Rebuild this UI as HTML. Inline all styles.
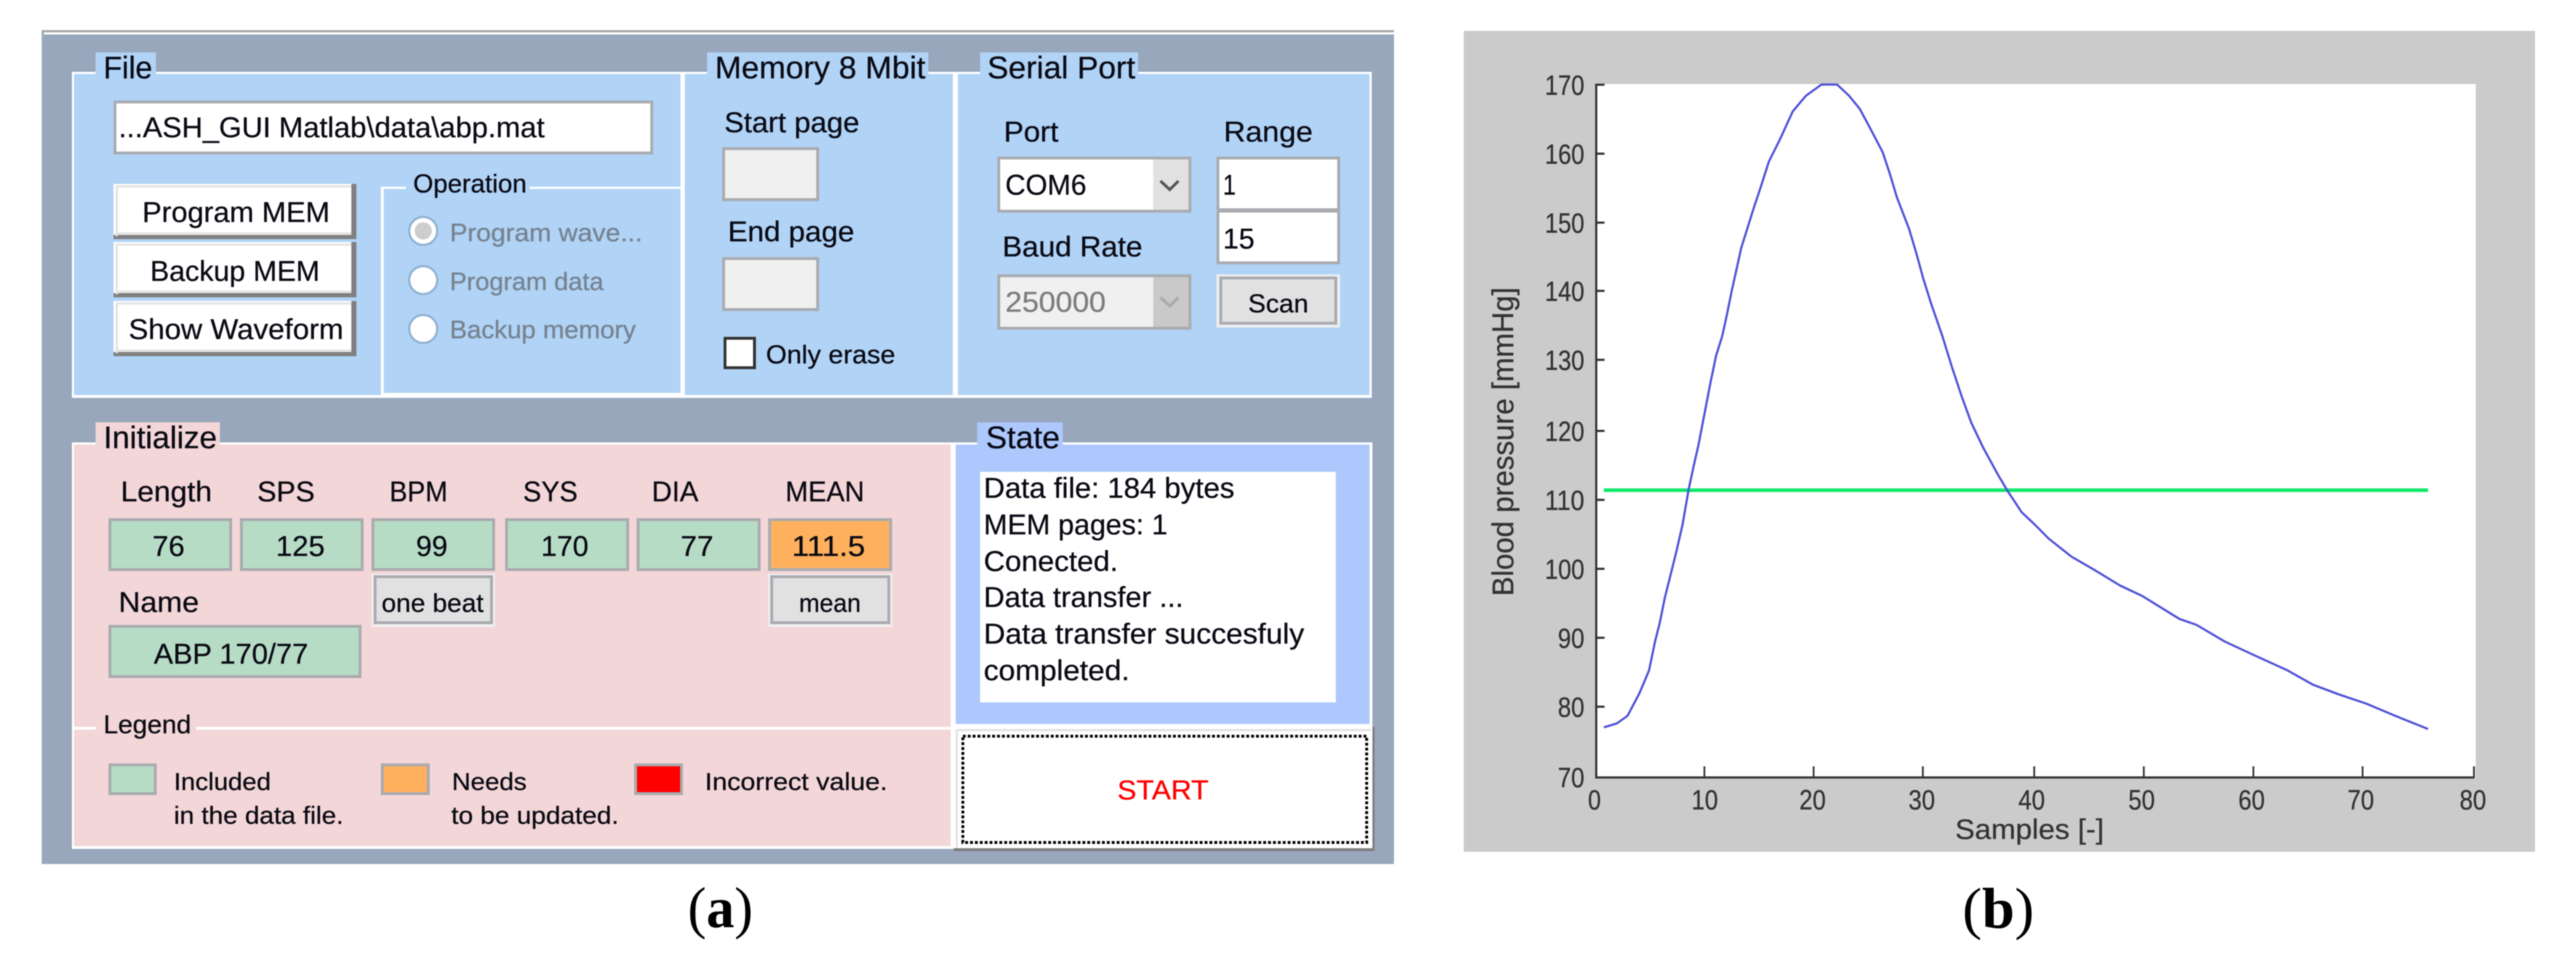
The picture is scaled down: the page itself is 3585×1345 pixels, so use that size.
<!DOCTYPE html>
<html><head><meta charset="utf-8"><title>GUI and waveform</title>
<style>
html,body{margin:0;padding:0;background:#fff}
body{width:3585px;height:1345px;overflow:hidden}
svg{display:block;filter:blur(.7px)}
text{font-family:"Liberation Sans",sans-serif;fill:#0a0a14;stroke:#0a0a14;stroke-width:.35px}
.g{font-size:44px}.l{font-size:40px}.s{font-size:36px}.d{fill:#76828f;stroke:#76828f;font-size:35px}
.ax{fill:#333;stroke:#333;font-size:39px}
.cap{font-family:"Liberation Serif",serif;font-size:80px;fill:#000;stroke:none}
.i{stroke:#a9abb0;stroke-width:4}
</style></head><body>
<svg xmlns="http://www.w3.org/2000/svg" width="3585" height="1345" viewBox="0 0 3585 1345">
<rect width="3585" height="1345" fill="#fff"/>
<!-- GUI panel -->
<rect x="58" y="42" width="1882" height="1161" fill="#98a7bc"/>
<rect x="58" y="42" width="1882" height="3" fill="#a5a5a5"/>
<rect x="61" y="45" width="1879" height="3" fill="#fff"/>
<!-- top boxes -->
<rect x="100" y="100" width="1809" height="454" fill="#fff"/>
<rect x="103" y="103" width="844" height="447" fill="#b0d3f6"/>
<rect x="953" y="103" width="373" height="447" fill="#b0d3f6"/>
<rect x="1333" y="103" width="573" height="447" fill="#b0d3f6"/>
<rect x="133" y="73" width="84" height="38" fill="#b0d3f6"/>
<rect x="984" y="73" width="308" height="38" fill="#b0d3f6"/>
<rect x="1364" y="73" width="220" height="38" fill="#b0d3f6"/>
<text x="144" y="109" class="g" textLength="68" lengthAdjust="spacingAndGlyphs">File</text>
<text x="995" y="109" class="g" textLength="293" lengthAdjust="spacingAndGlyphs">Memory 8 Mbit</text>
<text x="1374" y="109" class="g" textLength="206" lengthAdjust="spacingAndGlyphs">Serial Port</text>
<!-- file path -->
<rect x="160" y="142" width="747" height="71" fill="#fff" class="i"/>
<text x="165" y="191" class="l" textLength="593" lengthAdjust="spacingAndGlyphs">...ASH_GUI Matlab\data\abp.mat</text>
<!-- buttons -->
<g>
<rect x="158" y="256" width="338" height="77" fill="#808080"/><rect x="158" y="256" width="331" height="71" fill="#fff"/><path d="M162.500 329V259.500H489M162 325H489" fill="none" stroke="#e3e3e3" stroke-width="3"/>
<rect x="158" y="337" width="338" height="77" fill="#808080"/><rect x="158" y="337" width="331" height="71" fill="#fff"/><path d="M162.500 410V340.500H489M162 406H489" fill="none" stroke="#e3e3e3" stroke-width="3"/>
<rect x="158" y="419" width="338" height="77" fill="#808080"/><rect x="158" y="419" width="331" height="71" fill="#fff"/><path d="M162.500 492V422.500H489M162 488H489" fill="none" stroke="#e3e3e3" stroke-width="3"/>
</g>
<text x="198" y="309" class="l" textLength="261" lengthAdjust="spacingAndGlyphs">Program MEM</text>
<text x="209" y="391" class="l" textLength="236" lengthAdjust="spacingAndGlyphs">Backup MEM</text>
<text x="179" y="472" class="l" textLength="299" lengthAdjust="spacingAndGlyphs">Show Waveform</text>
<!-- Operation -->
<rect x="530" y="260" width="417" height="3" fill="#fff"/>
<rect x="530" y="260" width="4" height="290" fill="#fff"/>
<rect x="530" y="547" width="417" height="3" fill="#fff"/>
<rect x="565" y="250" width="172" height="20" fill="#b0d3f6"/>
<text x="575" y="268" class="s" textLength="158" lengthAdjust="spacingAndGlyphs">Operation</text>
<g stroke="#8fb2d0" stroke-width="3" fill="#fff">
<circle cx="589" cy="321.500" r="19.500"/><circle cx="589" cy="390" r="19.500"/><circle cx="589" cy="458" r="19.500"/></g>
<circle cx="589" cy="321.500" r="12" fill="#cdcdcd"/>
<text x="626" y="336" class="d" textLength="268" lengthAdjust="spacingAndGlyphs">Program wave...</text>
<text x="626" y="404" class="d" textLength="214" lengthAdjust="spacingAndGlyphs">Program data</text>
<text x="626" y="471" class="d" textLength="259" lengthAdjust="spacingAndGlyphs">Backup memory</text>
<!-- Memory -->
<text x="1008" y="184" class="l" textLength="188" lengthAdjust="spacingAndGlyphs">Start page</text>
<rect x="1007" y="207" width="131" height="71" fill="#f0f0f0" class="i"/>
<text x="1013" y="336" class="l" textLength="176" lengthAdjust="spacingAndGlyphs">End page</text>
<rect x="1007" y="360" width="131" height="71" fill="#f0f0f0" class="i"/>
<rect x="1009" y="471" width="41" height="41" fill="#fff" stroke="#333" stroke-width="4"/>
<text x="1066" y="506" class="s" textLength="180" lengthAdjust="spacingAndGlyphs">Only erase</text>
<!-- Serial -->
<text x="1397" y="197" class="l" textLength="76" lengthAdjust="spacingAndGlyphs">Port</text>
<text x="1703" y="197" class="l" textLength="124" lengthAdjust="spacingAndGlyphs">Range</text>
<rect x="1390" y="220" width="266" height="74" fill="#fff" class="i"/>
<rect x="1605" y="222" width="49" height="70" fill="#e1e1e1"/>
<path d="M1615 252L1628 264L1640 252" fill="none" stroke="#555" stroke-width="4"/>
<text x="1399" y="271" class="l" textLength="113" lengthAdjust="spacingAndGlyphs">COM6</text>
<rect x="1695" y="220" width="168" height="72" fill="#fff" class="i"/>
<rect x="1695" y="294" width="168" height="72" fill="#fff" class="i"/>
<text x="1702" y="271" class="l" textLength="18" lengthAdjust="spacingAndGlyphs">1</text>
<text x="1702" y="346" class="l" textLength="44" lengthAdjust="spacingAndGlyphs">15</text>
<text x="1395" y="357" class="l" textLength="195" lengthAdjust="spacingAndGlyphs">Baud Rate</text>
<rect x="1390" y="384" width="266" height="73" fill="#f0f0f0" class="i"/>
<rect x="1605" y="386" width="49" height="69" fill="#c9c9c9"/>
<path d="M1615 414L1628 426L1640 414" fill="none" stroke="#aaa" stroke-width="4"/>
<text x="1399" y="434" class="l" textLength="140" lengthAdjust="spacingAndGlyphs" style="fill:#7d7d7d;stroke:#7d7d7d">250000</text>
<rect x="1693" y="382" width="172" height="74" fill="#eee"/>
<rect x="1699" y="387" width="160" height="63" fill="#e1e1e1" class="i"/>
<text x="1737" y="435" class="s" textLength="84" lengthAdjust="spacingAndGlyphs">Scan</text>
<!-- Initialize -->
<rect x="100" y="616" width="1230" height="566" fill="#fff"/>
<rect x="103" y="619" width="1220" height="559" fill="#f3d6d7"/>
<rect x="133" y="588" width="173" height="38" fill="#f3d6d7"/>
<text x="144" y="624" class="g" textLength="158" lengthAdjust="spacingAndGlyphs">Initialize</text>
<text x="168" y="698" class="l" textLength="127" lengthAdjust="spacingAndGlyphs">Length</text>
<text x="358" y="698" class="l" textLength="80" lengthAdjust="spacingAndGlyphs">SPS</text>
<text x="542" y="698" class="l" textLength="81" lengthAdjust="spacingAndGlyphs">BPM</text>
<text x="728" y="698" class="l" textLength="76" lengthAdjust="spacingAndGlyphs">SYS</text>
<text x="907" y="698" class="l" textLength="65" lengthAdjust="spacingAndGlyphs">DIA</text>
<text x="1093" y="698" class="l" textLength="110" lengthAdjust="spacingAndGlyphs">MEAN</text>
<g fill="#b7dcc6" class="i">
<rect x="153" y="723.500" width="168" height="69.500"/>
<rect x="336" y="723.500" width="168" height="69.500"/>
<rect x="519" y="723.500" width="168" height="69.500"/>
<rect x="705" y="723.500" width="168.500" height="69.500"/>
<rect x="888" y="723.500" width="168.500" height="69.500"/>
<rect x="153" y="872" width="348" height="70"/>
</g>
<rect x="1071" y="723.500" width="168.500" height="69.500" fill="#ffb05d" class="i"/>
<text x="212" y="774" class="l" textLength="45" lengthAdjust="spacingAndGlyphs">76</text>
<text x="384" y="774" class="l" textLength="68" lengthAdjust="spacingAndGlyphs">125</text>
<text x="579" y="774" class="l" textLength="44" lengthAdjust="spacingAndGlyphs">99</text>
<text x="753" y="774" class="l" textLength="66" lengthAdjust="spacingAndGlyphs">170</text>
<text x="947" y="774" class="l" textLength="46" lengthAdjust="spacingAndGlyphs">77</text>
<text x="1102" y="774" class="l" textLength="102" lengthAdjust="spacingAndGlyphs">111.5</text>
<text x="165" y="852" class="l" textLength="112" lengthAdjust="spacingAndGlyphs">Name</text>
<text x="214" y="924" class="l" textLength="215" lengthAdjust="spacingAndGlyphs">ABP 170/77</text>
<rect x="517" y="799" width="172" height="74" fill="#eee"/>
<rect x="522" y="803" width="162" height="64" fill="#e1e1e1" class="i"/>
<text x="531" y="852" class="s" textLength="142" lengthAdjust="spacingAndGlyphs">one beat</text>
<rect x="1069" y="799" width="173" height="74" fill="#eee"/>
<rect x="1074" y="803" width="163" height="64" fill="#e1e1e1" class="i"/>
<text x="1112" y="852" class="s" textLength="86" lengthAdjust="spacingAndGlyphs">mean</text>
<!-- Legend -->
<rect x="103" y="1012" width="1220" height="4" fill="#fff"/>
<rect x="133" y="1005" width="140" height="20" fill="#f3d6d7"/>
<text x="144" y="1021" class="s" textLength="122" lengthAdjust="spacingAndGlyphs">Legend</text>
<rect x="153" y="1065" width="63" height="40" fill="#b7dcc6" class="i"/>
<rect x="532" y="1065" width="64" height="40" fill="#ffb05d" class="i"/>
<rect x="884.500" y="1065" width="64" height="40" fill="#f00" class="i"/>
<text x="242" y="1100" class="s" textLength="135" lengthAdjust="spacingAndGlyphs" style="font-size:34px">Included</text>
<text x="242" y="1147" class="s" textLength="236" lengthAdjust="spacingAndGlyphs" style="font-size:34px">in the data file.</text>
<text x="629" y="1100" class="s" textLength="104" lengthAdjust="spacingAndGlyphs" style="font-size:34px">Needs</text>
<text x="628" y="1147" class="s" textLength="233" lengthAdjust="spacingAndGlyphs" style="font-size:34px">to be updated.</text>
<text x="981" y="1100" class="s" textLength="254" lengthAdjust="spacingAndGlyphs" style="font-size:34px">Incorrect value.</text>
<!-- State -->
<rect x="1323" y="616" width="587" height="396" fill="#fff"/>
<rect x="1330" y="619" width="576" height="389" fill="#acc8fd"/>
<rect x="1360" y="588" width="119" height="38" fill="#acc8fd"/>
<text x="1372" y="624" class="g" textLength="103" lengthAdjust="spacingAndGlyphs">State</text>
<rect x="1364" y="657" width="495" height="321" fill="#fff"/>
<text x="1369" y="693" class="l" textLength="349" lengthAdjust="spacingAndGlyphs">Data file: 184 bytes</text>
<text x="1369" y="744" class="l" textLength="256" lengthAdjust="spacingAndGlyphs">MEM pages: 1</text>
<text x="1369" y="795" class="l" textLength="187" lengthAdjust="spacingAndGlyphs">Conected.</text>
<text x="1369" y="845" class="l" textLength="278" lengthAdjust="spacingAndGlyphs">Data transfer ...</text>
<text x="1369" y="896" class="l" textLength="446" lengthAdjust="spacingAndGlyphs">Data transfer succesfuly</text>
<text x="1369" y="947" class="l" textLength="203" lengthAdjust="spacingAndGlyphs">completed.</text>
<!-- START -->
<rect x="1327" y="1181" width="586" height="4" fill="#7f7f7f"/>
<rect x="1910" y="1012" width="3" height="173" fill="#7f7f7f"/>
<rect x="1323" y="1012" width="587" height="169" fill="#fff"/>
<path d="M1331.500 1181V1016.500H1908" fill="none" stroke="#e3e3e3" stroke-width="3"/>
<rect x="1340" y="1025" width="562" height="148" fill="none" stroke="#000" stroke-width="4" stroke-dasharray="4 2.800"/>
<text x="1555" y="1113" class="l" textLength="127" lengthAdjust="spacingAndGlyphs" style="fill:#f00;stroke:#f00;font-size:38px">START</text>
<!-- Caption a -->
<text x="957" y="1291" class="cap" textLength="91" lengthAdjust="spacingAndGlyphs">(<tspan font-weight="bold">a</tspan>)</text>
<!-- Chart -->
<rect x="2037" y="43" width="1491" height="1143" fill="#cbcbcb"/>
<rect x="2220" y="117" width="1225.500" height="966" fill="#fff"/>
<path d="M2221.500 117V1082.500H3443.500" fill="none" stroke="#333" stroke-width="3"/>
<path d="M2372 1067V1083M2524 1067V1083M2676 1067V1083M2831 1067V1083M2983.500 1067V1083M3136 1067V1083M3288 1067V1083M3443 1067V1083" stroke="#333" stroke-width="2.500" fill="none"/>
<path d="M2220 118H2233M2220 214H2233M2220 310H2233M2220 405H2233M2220 501H2233M2220 600H2233M2220 696H2233M2220 792H2233M2220 888H2233M2220 984H2233" stroke="#333" stroke-width="3" fill="none"/>
<rect x="2232" y="680" width="1147" height="5" fill="#0fe96b"/>
<polyline fill="none" stroke="#4f50d8" stroke-width="3" stroke-linejoin="round" points="2232,1012.700 2250,1007.300 2265,996.700 2281.700,965 2295,933.300 2303.300,893.300 2310,866.700 2316.700,833.300 2325,800 2333.300,766.700 2341.700,730 2350,681.700 2358.300,643.300 2363.300,621.700 2371.700,578.300 2380,535 2388.300,495 2396.700,468.300 2403.300,438.300 2410,405 2416.700,375 2423.300,345 2431.700,318.300 2440,291.700 2450,261.700 2461.700,225 2476.700,195 2495,155 2513.300,133.300 2535,117.700 2556.700,117.700 2573.300,133.300 2588.300,151.700 2601.700,176.700 2620,211.700 2630,241.700 2640,275 2656.700,318.300 2666.700,351.700 2676.700,388.300 2688.300,425 2703.300,468.300 2716.700,511.700 2730,551.700 2743.300,588.300 2760,623.300 2780,660 2793.800,683.300 2813.600,713.300 2831.400,730 2851.200,750 2882.800,775 2914.400,793.300 2950,815 2981.700,830 3033,861.700 3056.800,870 3096.300,893.300 3135.900,911.700 3183.300,933.300 3218.900,953.300 3254.500,966.700 3294,980 3333.600,996.700 3379,1015"/>
<g class="ax">
<text x="2150" y="132" class="ax" textLength="55" lengthAdjust="spacingAndGlyphs">170</text>
<text x="2150" y="228" class="ax" textLength="55" lengthAdjust="spacingAndGlyphs">160</text>
<text x="2150" y="324" class="ax" textLength="55" lengthAdjust="spacingAndGlyphs">150</text>
<text x="2150" y="419" class="ax" textLength="55" lengthAdjust="spacingAndGlyphs">140</text>
<text x="2150" y="515" class="ax" textLength="55" lengthAdjust="spacingAndGlyphs">130</text>
<text x="2150" y="614" class="ax" textLength="55" lengthAdjust="spacingAndGlyphs">120</text>
<text x="2150" y="710" class="ax" textLength="55" lengthAdjust="spacingAndGlyphs">110</text>
<text x="2150" y="806" class="ax" textLength="55" lengthAdjust="spacingAndGlyphs">100</text>
<text x="2168" y="902" class="ax" textLength="37" lengthAdjust="spacingAndGlyphs">90</text>
<text x="2168" y="998" class="ax" textLength="37" lengthAdjust="spacingAndGlyphs">80</text>
<text x="2168" y="1096" class="ax" textLength="37" lengthAdjust="spacingAndGlyphs">70</text>
<text x="2210" y="1127" class="ax" textLength="18" lengthAdjust="spacingAndGlyphs">0</text>
<text x="2354" y="1127" class="ax" textLength="37" lengthAdjust="spacingAndGlyphs">10</text>
<text x="2504" y="1127" class="ax" textLength="37" lengthAdjust="spacingAndGlyphs">20</text>
<text x="2656" y="1127" class="ax" textLength="37" lengthAdjust="spacingAndGlyphs">30</text>
<text x="2809" y="1127" class="ax" textLength="37" lengthAdjust="spacingAndGlyphs">40</text>
<text x="2962" y="1127" class="ax" textLength="37" lengthAdjust="spacingAndGlyphs">50</text>
<text x="3115" y="1127" class="ax" textLength="37" lengthAdjust="spacingAndGlyphs">60</text>
<text x="3267" y="1127" class="ax" textLength="37" lengthAdjust="spacingAndGlyphs">70</text>
<text x="3423" y="1127" class="ax" textLength="37" lengthAdjust="spacingAndGlyphs">80</text>
<text x="2721" y="1168" class="ax" textLength="207" lengthAdjust="spacingAndGlyphs">Samples [-]</text>
<text transform="translate(2106 830) rotate(-90)" class="ax" style="font-size:42px" textLength="430" lengthAdjust="spacingAndGlyphs">Blood pressure [mmHg]</text>
</g>
<text x="2731" y="1292" class="cap" textLength="100" lengthAdjust="spacingAndGlyphs">(<tspan font-weight="bold">b</tspan>)</text>
</svg>
</body></html>
